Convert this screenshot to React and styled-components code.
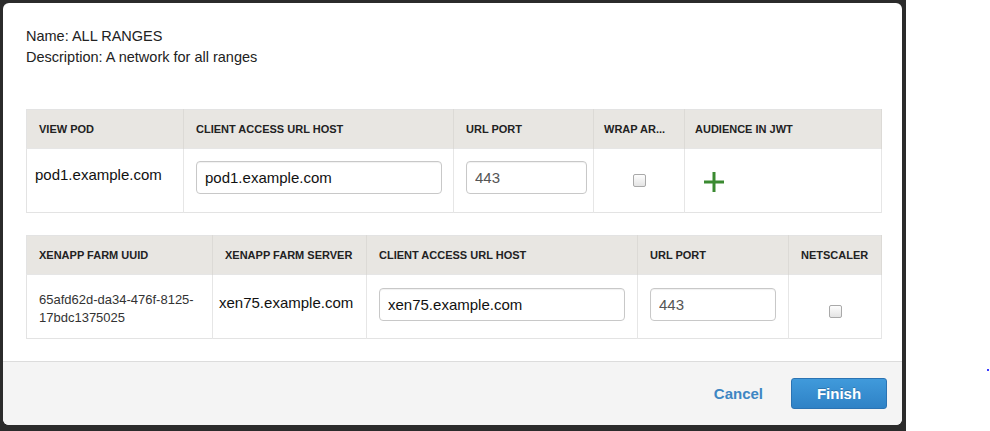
import React from 'react'
import styled, { createGlobalStyle } from 'styled-components'

const Global = createGlobalStyle`
html, body {
  margin: 0;
  padding: 0;
  background: #ffffff;
  font-family: "Liberation Sans", Arial, sans-serif;
}
`;

const Page = styled.div`
display: flex;
width: 990px;
height: 431px;
overflow: hidden;
`;

const Backdrop = styled.div`
width: 906px;
height: 431px;
box-sizing: border-box;
background: #2b2b2b;
padding: 3px 4px 6px 3px;
flex-shrink: 0;
`;

const Side = styled.div`
flex: 1;
`;

const Dot = styled.div`
width: 2px;
height: 2px;
background: #3a3aff;
margin: 369px 0 0 81px;
`;

const Dialog = styled.div`
height: 100%;
background: #fff;
border-radius: 6px;
display: flex;
flex-direction: column;
overflow: hidden;
`;

const Body = styled.div`
flex: 1;
padding: 23px 20px 0 23px;
`;

const Info = styled.div`
font-size: 14.5px;
line-height: 21px;
color: #222;
margin-bottom: 41px;
`;

const Table = styled.table`
width: 855px;
table-layout: fixed;
border-collapse: collapse;
margin-bottom: 22px;
border: 1px solid #e3e3e3;
`;

const Th = styled.th`
box-sizing: border-box;
width: ${p => p.$w}px;
height: 39px;
background: #e8e6e2;
text-align: left;
padding: 0 4px 0 ${p => p.$pl ?? 12}px;
font-size: 11px;
font-weight: bold;
color: #222;
border-right: 1px solid #dcdad6;
white-space: nowrap;
overflow: hidden;
text-overflow: ellipsis;
`;

const Td = styled.td`
box-sizing: border-box;
height: 64px;
vertical-align: top;
padding: ${p => p.$pt ?? 12}px 4px 0 ${p => p.$pl ?? 12}px;
border-right: 1px solid #e6e6e6;
border-top: 1px solid #e6e6e6;
text-align: ${p => (p.$center ? 'center' : 'left')};
`;

const CellText = styled.div`
font-size: ${p => p.$size ?? 15}px;
line-height: ${p => p.$lh ?? 20}px;
color: ${p => p.$color ?? '#111'};
`;

const Input = styled.input`
width: ${p => p.$w}px;
height: 33px;
box-sizing: border-box;
border: 1px solid #c8c8c8;
border-radius: 4px;
padding: 0 8px;
font-family: "Liberation Sans", Arial, sans-serif;
font-size: 15px;
color: ${p => (p.$muted ? '#555' : '#111')};
box-shadow: inset 0 1px 1px rgba(0, 0, 0, 0.06);
outline: none;
`;

const Check = styled.span`
display: inline-block;
width: 11px;
height: 11px;
border: 1px solid #a9a9a9;
border-radius: 2px;
background: linear-gradient(#fdfdfd, #e4e4e4);
margin-top: ${p => p.$mt}px;
`;

const Footer = styled.div`
height: 64px;
box-sizing: border-box;
background: #f4f4f4;
border-top: 1px solid #dcdcdc;
display: flex;
align-items: center;
justify-content: flex-end;
padding: 0 15px 0 0;
gap: 28px;
`;

const LinkButton = styled.button`
background: none;
border: none;
padding: 0;
font-family: "Liberation Sans", Arial, sans-serif;
font-size: 15px;
font-weight: bold;
color: #3d86c3;
cursor: pointer;
`;

const PrimaryButton = styled.button`
width: 96px;
height: 31px;
border: 1px solid #2b73b3;
border-radius: 3px;
background: linear-gradient(#409adb, #2f82c6);
color: #fff;
font-family: "Liberation Sans", Arial, sans-serif;
font-size: 15px;
font-weight: bold;
text-shadow: 0 -1px 0 rgba(0, 0, 0, 0.2);
cursor: pointer;
`;

const Plus = () => (
  <svg width="22" height="22" viewBox="0 0 22 22" style={{ marginTop: 10, marginLeft: 6 }}>
    <path d="M11 1v20M1 11h20" stroke="#3b8a31" strokeWidth="3" fill="none" />
  </svg>
)

const App = () => {
  return (
    <Page>
      <Global />
      <Backdrop>
        <Dialog>
          <Body>
            <Info>
              <div>Name: ALL RANGES</div>
              <div>Description: A network for all ranges</div>
            </Info>
            <Table>
              <thead>
                <tr>
                  <Th $w={157}>VIEW POD</Th>
                  <Th $w={270}>CLIENT ACCESS URL HOST</Th>
                  <Th $w={140}>URL PORT</Th>
                  <Th $w={91} $pl={10}>WRAP AR...</Th>
                  <Th $w={197} $pl={10}>AUDIENCE IN JWT</Th>
                </tr>
              </thead>
              <tbody>
                <tr>
                  <Td $pt={16} $pl={8}><CellText>pod1.example.com</CellText></Td>
                  <Td><Input $w={246} defaultValue="pod1.example.com" /></Td>
                  <Td $pl={12}><Input $w={121} $muted defaultValue="443" /></Td>
                  <Td $center $pl={4}><Check $mt={13} /></Td>
                  <Td><Plus /></Td>
                </tr>
              </tbody>
            </Table>
            <Table>
              <thead>
                <tr>
                  <Th $w={186}>XENAPP FARM UUID</Th>
                  <Th $w={154}>XENAPP FARM SERVER</Th>
                  <Th $w={271}>CLIENT ACCESS URL HOST</Th>
                  <Th $w={151}>URL PORT</Th>
                  <Th $w={93}>NETSCALER</Th>
                </tr>
              </thead>
              <tbody>
                <tr>
                  <Td $pt={16}><CellText $size={13} $lh={18} $color="#333">65afd62d-da34-476f-8125-17bdc1375025</CellText></Td>
                  <Td $pt={18} $pl={6}><CellText>xen75.example.com</CellText></Td>
                  <Td $pt={13}><Input $w={246} defaultValue="xen75.example.com" /></Td>
                  <Td $pt={13}><Input $w={126} $muted defaultValue="443" /></Td>
                  <Td $center $pl={4}><Check $mt={18} /></Td>
                </tr>
              </tbody>
            </Table>
          </Body>
          <Footer>
            <LinkButton>Cancel</LinkButton>
            <PrimaryButton>Finish</PrimaryButton>
          </Footer>
        </Dialog>
      </Backdrop>
      <Side>
        <Dot />
      </Side>
    </Page>
  )
}

export default App
